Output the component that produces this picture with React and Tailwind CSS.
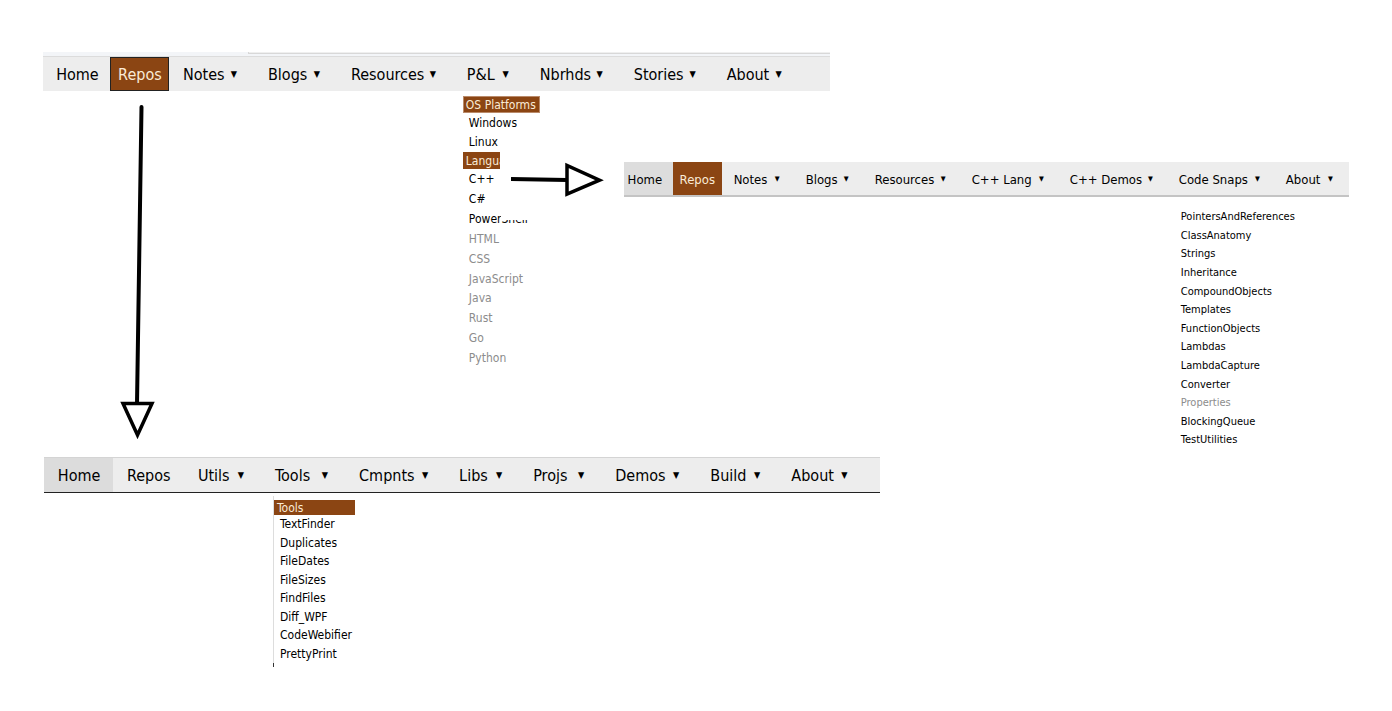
function Caret({ size }) {
  return <span aria-hidden="true" className={size}>▼</span>;
}

function BarLink({ children, className }) {
  return (
    <li className="relative flex">
      <a href="#" className={`flex flex-1 items-center pt-0.5 whitespace-nowrap ${className}`}>{children}</a>
    </li>
  );
}

function BarMenu({ label, className, caret = "text-[9px]", children }) {
  return (
    <li className="relative flex">
      <button type="button" className={`flex min-w-0 flex-1 items-center justify-between pt-0.5 whitespace-nowrap ${className}`}>
        {label}
        <Caret size={caret} />
      </button>
      {children}
    </li>
  );
}

function MenuItems({ items, className, muted = [] }) {
  return (
    <ul className={`grid auto-rows-fr ${className}`}>
      {items.map((item) => (
        <li key={item} className="flex items-center">
          <a href="#" className={muted.includes(item) ? "text-[#8c8c8c]" : "text-black"}>{item}</a>
        </li>
      ))}
    </ul>
  );
}

function DownArrow() {
  return (
    <svg aria-hidden="true" className="absolute top-12 left-2.5 h-[336px] w-9" viewBox="0 0 36 336" fill="none" stroke="#000">
      <path d="M21.5 2 L17 299" strokeWidth="4" strokeLinecap="round" />
      <path d="M3 298.500 H32 L17.500 330 Z" strokeWidth="3.500" fill="#fff" />
    </svg>
  );
}

function RightArrow() {
  return (
    <svg aria-hidden="true" className="absolute top-[-8px] left-[42px] h-9 w-24" viewBox="0 0 96 36" fill="none" stroke="#000">
      <path d="M0 18 L56 19" strokeWidth="4" />
      <path d="M56 4.500 V33 L88.500 19.200 Z" strokeWidth="3.500" fill="#fff" />
    </svg>
  );
}

const siteMenu = "pl-3.5 pr-[17px]";
const repoMenu = "pl-3.5 pr-[17px]";
const codeMenu = "pl-3 pr-3.5";
const accent = "bg-[#8b4513] text-[#faebd7]";

const languages = ["HTML", "CSS", "JavaScript", "Java", "Rust", "Go", "Python"];
const tools = ["TextFinder", "Duplicates", "FileDates", "FileSizes", "FindFiles", "Diff_WPF", "CodeWebifier", "PrettyPrint"];
const snaps = [
  "PointersAndReferences", "ClassAnatomy", "Strings", "Inheritance", "CompoundObjects", "Templates", "FunctionObjects",
  "Lambdas", "LambdaCapture", "Converter", "Properties", "BlockingQueue", "TestUtilities",
];

export default function App() {
  return (
    <main className="min-h-screen bg-white pt-[52px] font-['DejaVu_Sans_Condensed','DejaVu_Sans',sans-serif] text-black">
      <nav aria-label="Site" className="ml-[3.1%] w-[56.5%]">
        <div className="flex h-[5px] border-b border-[#dcdcdc] bg-[#f3f5f8]">
          <div className="w-[26%]" />
          <div className="h-[2px] flex-1 border-b border-l border-[#d8d8d8] bg-[#efefef]" />
        </div>
        <ul className="grid h-[34px] grid-cols-[67fr_59fr_85fr_83fr_116fr_73fr_94fr_93fr_86fr_31fr] bg-[#ededed] text-base">
          <BarLink className="pl-[13px]">Home</BarLink>
          <li className="relative flex">
            <a href="#" className={`flex flex-1 items-center border border-[#222] pt-0.5 pl-[7px] ${accent}`}>Repos</a>
            <DownArrow />
          </li>
          <BarMenu label="Notes" className={siteMenu} />
          <BarMenu label="Blogs" className={siteMenu} />
          <BarMenu label="Resources" className={siteMenu} />
          <BarMenu label="P&L" className={siteMenu}>
            <div className="absolute top-[39px] left-2.5 text-xs">
              <h2 className={`flex h-[17px] w-[77px] items-center border border-[#b98a6a] pl-0.5 whitespace-nowrap ${accent}`}>OS Platforms</h2>
              <MenuItems items={["Windows", "Linux"]} className="h-[39px] pl-1.5" />
              <h2 className={`flex h-[17px] w-[37px] items-center overflow-hidden pl-[3px] ${accent}`}>Langua</h2>
              <ul className="grid h-[60px] auto-rows-fr pl-1.5">
                <li className="relative flex items-center">
                  <a href="#">C++</a>
                  <RightArrow />
                </li>
                <li className="flex items-center"><a href="#">C#</a></li>
                <li className="relative flex items-center">
                  <a href="#">PowerShell</a>
                  <span className="absolute top-0 left-8 h-[11px] w-9 bg-white" />
                </li>
              </ul>
              <MenuItems items={languages} muted={languages} className="h-[139px] pl-1.5" />
            </div>
          </BarMenu>
          <BarMenu label="Nbrhds" className={siteMenu} />
          <BarMenu label="Stories" className={siteMenu} />
          <BarMenu label="About" className={siteMenu} />
        </ul>
      </nav>

      <nav aria-label="C++" className="mt-[71px] ml-[44.8%] w-[52.1%]">
        <ul className="grid h-[35px] grid-cols-[49fr_49fr_72fr_69fr_97fr_98fr_109fr_107fr_73fr_2fr] border-b-2 border-[#c4c4c4] bg-[#ededed] text-[13px]">
          <BarLink className="bg-[#dddddd] pl-1">Home</BarLink>
          <BarLink className={`pl-[7px] ${accent}`}>Repos</BarLink>
          <BarMenu label="Notes" caret="text-[7px]" className={codeMenu} />
          <BarMenu label="Blogs" caret="text-[7px]" className={codeMenu} />
          <BarMenu label="Resources" caret="text-[7px]" className={codeMenu} />
          <BarMenu label="C++ Lang" caret="text-[7px]" className={codeMenu} />
          <BarMenu label="C++ Demos" caret="text-[7px]" className={codeMenu} />
          <BarMenu label="Code Snaps" caret="text-[7px]" className={codeMenu}>
            <div className="absolute top-[46px] left-3.5 text-[11px]">
              <MenuItems items={snaps} muted={["Properties"]} className="h-[242px]" />
            </div>
          </BarMenu>
          <BarMenu label="About" caret="text-[7px]" className={codeMenu} />
        </ul>
      </nav>

      <nav aria-label="Repositories" className="mt-[260px] ml-[3.15%] w-[60.1%]">
        <ul className="grid h-9 grid-cols-[69fr_71fr_77fr_84fr_100fr_74fr_82fr_95fr_81fr_87fr_16fr] border-t border-b border-t-[#d4d4d4] border-b-[#222] bg-[#ededed] text-base">
          <BarLink className="bg-[#dcdcdc] pl-3.5">Home</BarLink>
          <BarLink className="pl-3.5">Repos</BarLink>
          <BarMenu label="Utils" className={repoMenu} />
          <BarMenu label="Tools" className={repoMenu}>
            <div className="absolute top-[38px] left-3 border-l border-[#dddddd] pt-1 text-xs">
              <h2 className={`flex h-[15px] w-[81px] items-center pl-[3px] ${accent}`}>Tools</h2>
              <MenuItems items={tools} className="h-[148px] pl-1.5" />
              <div className="-ml-px h-1 w-px bg-[#333]" />
            </div>
          </BarMenu>
          <BarMenu label="Cmpnts" className={repoMenu} />
          <BarMenu label="Libs" className={repoMenu} />
          <BarMenu label="Projs" className={repoMenu} />
          <BarMenu label="Demos" className={repoMenu} />
          <BarMenu label="Build" className={repoMenu} />
          <BarMenu label="About" className={repoMenu} />
        </ul>
      </nav>
    </main>
  );
}
